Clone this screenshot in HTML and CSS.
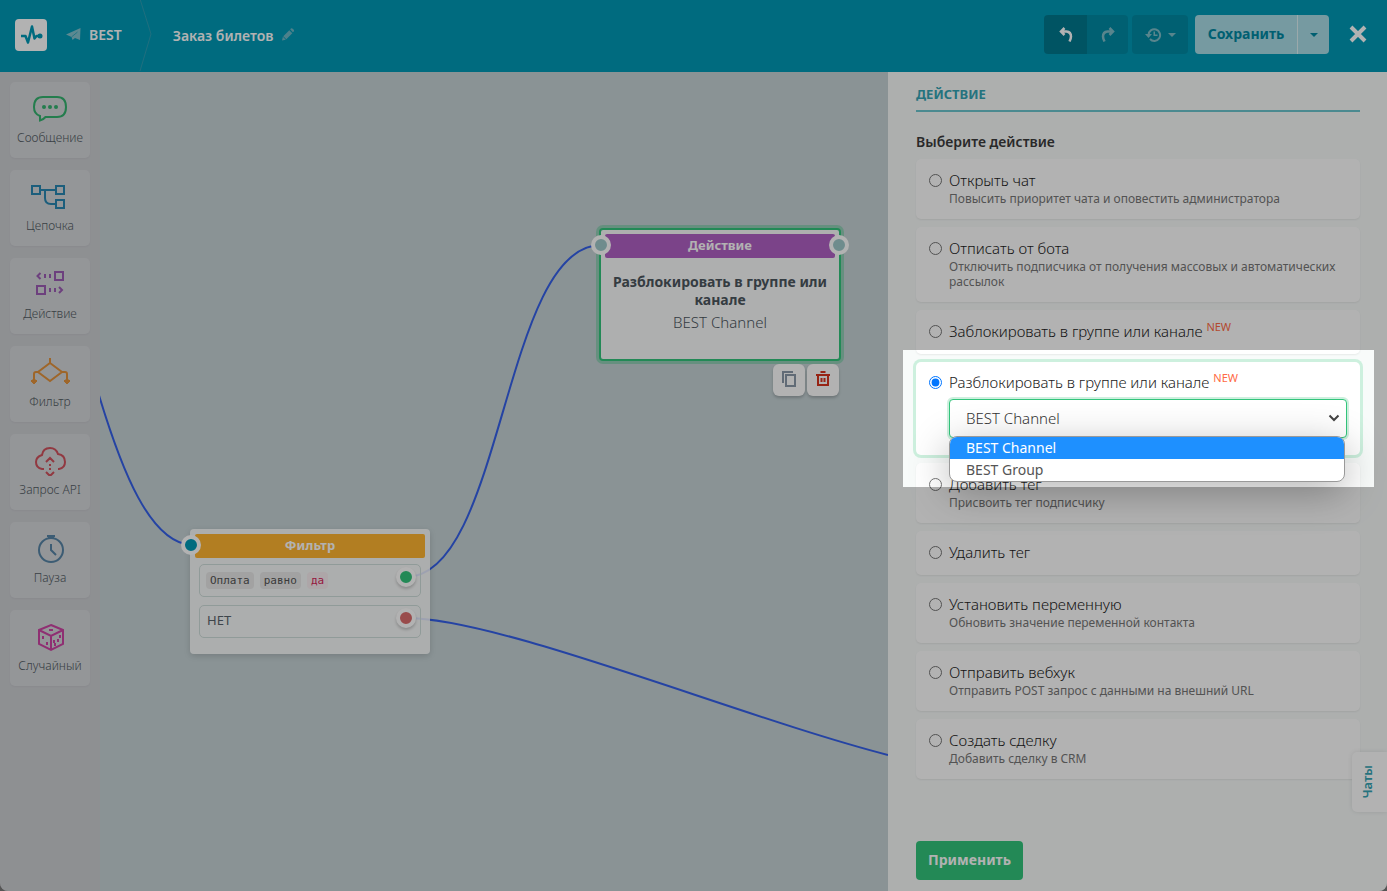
FILE: index.html
```html
<!DOCTYPE html>
<html lang="ru">
<head>
    <meta charset="UTF-8">
    <title>Заказ билетов</title>
    <meta name="viewport" content="width=device-width, initial-scale=1.0">
    <link rel="stylesheet" href="styles.css">
</head>
<body>
<div class="app">
    <header class="header">
        <a class="logo" href="#" aria-label="BEST">
            <svg width="32" height="32" viewBox="0 0 32 32"><path d="M6 17h4.500l2.500 6.500 4-16 2.500 12 2-2.500h4" fill="none" stroke="#009ab7" stroke-width="2.500" stroke-linejoin="round"/><circle cx="25" cy="17" r="2.500" fill="#009ab7"/></svg>
        </a>
        <a class="bot" href="#">
            <svg width="15" height="14" viewBox="0 0 15 14"><path d="M0 7.500 14.500 1 14 13 9 11 6.500 13 5.500 10z" fill="#85c4d0"/><path d="M5.500 10 11.500 5" stroke="#009ab7" stroke-width=".6"/></svg>
            BEST
        </a>
        <svg class="chevron" width="14" height="72" viewBox="0 0 14 72"><path d="M1 0 12 35 1 72" fill="none" stroke="#2e9fb5"/></svg>
        <h1 class="flow-name">Заказ билетов</h1>
        <button class="edit" aria-label="Изменить">
            <svg width="12" height="13" viewBox="0 0 14 14"><path d="M0 14 1 9.500 4.500 13zM1.500 9 8.500 2l3.500 3.500-7 7zM9.500 1l1-1q1-.6 2 .3l1.200 1.200q.7 1 0 2l-1 1z" fill="#6fb9c7"/></svg>
        </button>
        <div class="tools">
            <div class="group">
                <button class="tool undo" aria-label="Отменить">
                    <svg width="14" height="16" viewBox="0 0 14 16"><path d="M5.500 1 2 4.500 5.500 8M2 4.500h5.500q4.500.5 4.500 5 0 2-1.500 5" fill="none" stroke="#fff" stroke-width="2.500"/></svg>
                </button>
                <button class="tool redo" aria-label="Повторить">
                    <svg width="14" height="16" viewBox="0 0 14 16"><path d="M8.500 1 12 4.500 8.500 8M12 4.500H6.500q-4.500.5-4.500 5 0 2 1.500 5" fill="none" stroke="#7fbfca" stroke-width="2.500"/></svg>
                </button>
            </div>
            <button class="tool history" aria-label="История">
                <svg width="17" height="14" viewBox="0 0 17 14"><path d="M3.500 7a5.800 5.800 0 1 1 1.500 4" fill="none" stroke="#7fbfca" stroke-width="2"/><path d="M0 6h7L3.500 10zM8.500 3.500h1.500v3h2.500V8h-4z" fill="#7fbfca"/></svg>
                <svg width="8" height="4" viewBox="0 0 8 4"><path d="M0 0h8L4 4z" fill="#7fbfca"/></svg>
            </button>
            <div class="group save-group">
                <button class="save">Сохранить</button>
                <button class="save-more" aria-label="Ещё">
                    <svg width="8" height="4" viewBox="0 0 8 4"><path d="M0 0h8L4 4z" fill="#0088a3"/></svg>
                </button>
            </div>
            <button class="close" aria-label="Закрыть">
                <svg width="18" height="18" viewBox="0 0 18 18"><path d="M2 2l14 14M16 2 2 16" stroke="#fff" stroke-width="4"/></svg>
            </button>
        </div>
    </header>

    <div class="main">
        <nav class="sidebar">
            <button class="block">
                <svg width="40" height="32" viewBox="0 0 40 32" fill="none" stroke="#34b36f" stroke-width="2"><path d="M13 5h14q9 0 9 10t-9 10H15.500q-2.500 3-5.500 3.500V24Q4 22 4 15 4 5 13 5z"/><g fill="#34b36f" stroke="none"><circle cx="14" cy="15" r="2"/><circle cx="20" cy="15" r="2"/><circle cx="26" cy="15" r="2"/></g></svg>
                Сообщение
            </button>
            <button class="block">
                <svg width="40" height="32" viewBox="0 0 40 32" fill="none" stroke="#2987b2" stroke-width="2"><rect x="2" y="6" width="8" height="8"/><rect x="26" y="6" width="8" height="8"/><rect x="26" y="20" width="8" height="8"/><path d="M10 10h16M15 10v8q0 6 6 6h5"/></svg>
                Цепочка
            </button>
            <button class="block">
                <svg width="40" height="32" viewBox="0 0 40 32" fill="none" stroke="#9c5cb5" stroke-width="2"><rect x="25" y="4" width="8" height="8"/><rect x="7" y="18" width="8" height="8"/><path d="M10.500 5 7.500 8l3 3M29 19l3 3-3 3M15 6v4M20 6v4M20 20v4M25 20v4"/></svg>
                Действие
            </button>
            <button class="block">
                <svg width="40" height="32" viewBox="0 0 40 32" fill="none" stroke="#e3933d" stroke-width="2"><path d="M20 2v5M20 7 32 16 20 25 8 16zM8 16H6q-2 0-2 2v8M32 16h3q2 0 2 2v8"/><path d="M2 24h4l1 1-3 3-3-3zM35 24h4l1 1-3 3-3-3z" fill="#e3933d" stroke-width="1"/></svg>
                Фильтр
            </button>
            <button class="block">
                <svg width="40" height="32" viewBox="0 0 40 32" fill="none" stroke="#d0525e" stroke-width="2"><path d="M14 25h-2q-6-1-6-7 0-5 6-7 1-7 8-7 6 0 8 6 7 1 7 8 0 6-6 7h-1M16 18l4-4 4 4M16 28l4 4 4-4M20 20v2M20 24v2"/></svg>
                Запрос API
            </button>
            <button class="block">
                <svg width="40" height="32" viewBox="0 0 40 32" fill="none" stroke="#5785a6" stroke-width="2"><circle cx="21" cy="18" r="12"/><path d="M17 4h8M18 5.500h6M21 12v6l5 5"/></svg>
                Пауза
            </button>
            <button class="block">
                <svg width="40" height="32" viewBox="0 0 40 32" fill="none" stroke="#cd44a4" stroke-width="2"><path d="M21 5 33 10v14L21 30 9 24V10zM9 10l12 6 12-6M21 16v14"/><path d="M19 10h4M13 16v3M17 22v3M30 15v3M28 19v3M25 23v3M24 20v3"/></svg>
                Случайный
            </button>
        </nav>

        <div class="canvas">
            <svg class="lines" width="788" height="819" viewBox="0 0 788 819" fill="none" stroke="#3561ea" stroke-width="2">
                <path d="M-2 320C22 400 50 470 91 473"/>
                <path d="M306 505C403 505 403 173 501 173"/>
                <path d="M306 546C400 546 640 645 788 683"/>
            </svg>

            <div class="node node-action">
                <span class="port port-in"></span>
                <span class="port port-out"></span>
                <p class="node-title purple">Действие</p>
                <p class="node-name">Разблокировать в группе или канале</p>
                <p class="node-text">BEST Channel</p>
                <div class="node-tools">
                    <button class="node-tool" aria-label="Копировать">
                        <svg width="14" height="16" viewBox="0 0 14 16" fill="none" stroke="#8b9aa9" stroke-width="2"><path d="M1 12V1h10"/><rect x="4" y="4" width="9" height="11"/></svg>
                    </button>
                    <button class="node-tool" aria-label="Удалить">
                        <svg width="14" height="16" viewBox="0 0 14 16" fill="none" stroke="#d9341f" stroke-width="2"><path d="M0 4h14M4.500 1h5M2 4v10h10V4M5.500 7v4M8.500 7v4"/></svg>
                    </button>
                </div>
            </div>

            <div class="node node-filter">
                <span class="port port-in"></span>
                <p class="node-title orange">Фильтр</p>
                <div class="row">
                    <code>Оплата</code><code>равно</code><code class="red">да</code>
                    <span class="port port-row green"></span>
                </div>
                <div class="row">
                    <span class="no">НЕТ</span>
                    <span class="port port-row coral"></span>
                </div>
            </div>
        </div>

        <form class="panel">
            <h2 class="panel-title">ДЕЙСТВИЕ</h2>
            <h3 class="panel-sub">Выберите действие</h3>
            <div class="options">
                <div class="option">
                    <input type="radio" name="action" id="a1">
                    <label for="a1">Открыть чат<small>Повысить приоритет чата и оповестить администратора</small></label>
                </div>
                <div class="option">
                    <input type="radio" name="action" id="a2">
                    <label for="a2">Отписать от бота<small>Отключить подписчика от получения массовых и автоматических рассылок</small></label>
                </div>
                <div class="option">
                    <input type="radio" name="action" id="a3">
                    <label for="a3">Заблокировать в группе или канале <sup>NEW</sup></label>
                </div>
                <div class="option selected">
                    <input type="radio" name="action" id="a4" checked>
                    <div class="option-body">
                        <label for="a4">Разблокировать в группе или канале <sup>NEW</sup></label>
                        <div class="select-wrap">
                            <select class="select" aria-label="Канал">
                                <option>BEST Channel</option>
                                <option>BEST Group</option>
                            </select>
                            <svg class="arrow" width="12" height="8" viewBox="0 0 12 8"><path d="M1.500 1.500 6 6l4.500-4.500" fill="none" stroke="#444" stroke-width="2"/></svg>
                            <ul class="dropdown">
                                <li class="active">BEST Channel</li>
                                <li>BEST Group</li>
                            </ul>
                        </div>
                    </div>
                    <div class="spotlight"></div>
                </div>
                <div class="option">
                    <input type="radio" name="action" id="a5">
                    <label for="a5">Добавить тег<small>Присвоить тег подписчику</small></label>
                </div>
                <div class="option">
                    <input type="radio" name="action" id="a6">
                    <label for="a6">Удалить тег</label>
                </div>
                <div class="option">
                    <input type="radio" name="action" id="a7">
                    <label for="a7">Установить переменную<small>Обновить значение переменной контакта</small></label>
                </div>
                <div class="option">
                    <input type="radio" name="action" id="a8">
                    <label for="a8">Отправить вебхук<small>Отправить POST запрос с данными на внешний URL</small></label>
                </div>
                <div class="option">
                    <input type="radio" name="action" id="a9">
                    <label for="a9">Создать сделку<small>Добавить сделку в CRM</small></label>
                </div>
            </div>
            <button type="button" class="apply">Применить</button>
        </form>
    </div>
    <button class="chats"><span>Чаты</span></button>
</div>
</body>
</html>
```

FILE: styles.css
```css
*{margin: 0;padding: 0;box-sizing: border-box;}
body{
    overflow: hidden;
    background-color: #555;
    font-family: "Noto Sans", "Open Sans", sans-serif;
    font-size: 14px;
    color: #3c3c3c;
}
button{
    border: none;
    background: none;
    font-family: inherit;
    cursor: pointer;
}
a{text-decoration: none;}
svg{display: block;flex-shrink: 0;}

.app{
    position: relative;
    display: flex;
    flex-direction: column;
    height: 100vh;
    overflow: hidden;
    border-radius: 0 0 8px 8px;
}

/* header */
.header{
    display: flex;
    align-items: center;
    flex-shrink: 0;
    height: 72px;
    padding: 0 20px 2px 15px;
    background-color: #009ab7;
}
.logo{
    border-radius: 4px;
    background-color: #fff;
}
.bot{
    display: flex;
    align-items: center;
    gap: 8px;
    margin-left: 19px;
    padding-bottom: 2px;
    font-size: 14px;
    font-weight: 600;
    color: #fff;
}
.chevron{margin-left: 17px;}
.flow-name{
    margin-left: 20px;
    font-size: 14px;
    font-weight: 600;
    color: #fff;
}
.edit{margin-left: 9px;padding-bottom: 2px;}
.tools{
    display: flex;
    align-items: center;
    margin-left: auto;
    padding-bottom: 1px;
}
.group{
    display: flex;
    overflow: hidden;
    border-radius: 4px;
}
.tool{
    display: flex;
    align-items: center;
    justify-content: center;
    gap: 6px;
    height: 39px;
    background-color: #008aa4;
}
.undo{width: 43px;background-color: #00798f;}
.redo{width: 41px;}
.history{width: 56px;margin: 0 7px 0 4px;border-radius: 4px;}
.save,.save-more{
    height: 39px;
    background-color: #a9dde7;
}
.save{
    width: 102px;
    padding-bottom: 2px;
    font-size: 14px;
    font-weight: bold;
    color: #0088a3;
}
.save-more{
    display: flex;
    align-items: center;
    justify-content: center;
    width: 32px;
    border-left: 1px solid #dff2f5;
}
.close{margin-left: 20px;padding-bottom: 2px;}

.main{
    display: flex;
    flex: 1;
    min-height: 0;
}

/* blocks on the left */
.sidebar{
    display: flex;
    flex-direction: column;
    gap: 12px;
    width: 100px;
    padding: 10px;
    background-color: #ccced2;
}
.block{
    display: flex;
    flex-direction: column;
    align-items: center;
    gap: 6px;
    height: 76px;
    padding-top: 10px;
    border-radius: 5px;
    background-color: #d5d7da;
    font-size: 12px;
    font-weight: 300;
    line-height: 16px;
    color: #525b63;
    box-shadow: 0 1px 2px rgba(0,0,0,.04);
}

/* canvas */
.canvas{
    position: relative;
    flex: 1;
    background-color: #c6d3d6;
}
.lines{
    position: absolute;
    left: 0;
    top: 0;
}
.node{
    position: absolute;
    border-radius: 4px;
    background-color: rgba(255,255,255,.85);
    box-shadow: 0 2px 6px rgba(0,0,0,.15);
}
.node-action{
    left: 499px;
    top: 156px;
    width: 242px;
    height: 133px;
    padding: 4px;
    border: 2px solid #33c57c;
    background-color: #fafbfb;
    box-shadow: 0 0 0 3px rgba(51,197,124,.35);
}
.node-filter{
    left: 90px;
    top: 457px;
    width: 240px;
    height: 125px;
    padding: 5px;
}
.node-title{
    height: 24px;
    border-radius: 2px;
    font-size: 13px;
    font-weight: bold;
    line-height: 23px;
    text-align: center;
    color: #fff;
}
.purple{margin-bottom: 15px;background-color: #b161c4;}
.orange{background-color: #ffb531;}
.node-name,.node-text{
    line-height: 18px;
    text-align: center;
    color: #4c565e;
}
.node-name{
    margin-bottom: 4px;
    font-size: 14px;
    font-weight: bold;
}
.node-text{
    font-size: 15px;
    font-weight: 300;
}
.node-tools{
    position: absolute;
    right: 0;
    top: 134px;
    display: flex;
    gap: 2px;
}
.node-tool{
    display: flex;
    align-items: center;
    justify-content: center;
    width: 32px;
    height: 32px;
    padding-bottom: 2px;
    border-radius: 6px;
    background-color: #fff;
    box-shadow: 0 2px 3px rgba(0,0,0,.2);
}
.port{
    position: absolute;
    width: 20px;
    height: 20px;
    border: 4px solid #fff;
    border-radius: 50%;
    background-color: #009ab7;
}
.port-in{left: -9px;top: 6px;}
.node-action .port{
    top: 5px;
    background-color: #9fc9cb;
}
.node-action .port-in{left: -10px;}
.node-action .port-out{right: -10px;}
.row{
    position: relative;
    display: flex;
    align-items: center;
    gap: 6px;
    height: 33px;
    margin: 6px 4px 8px;
    padding: 0 6px;
    border: 1px solid #cfdedb;
    border-radius: 5px;
    font-size: 13px;
    color: #5a646c;
}
.row code{
    padding: 0 4px;
    border-radius: 4px;
    background-color: #e8e8e8;
    font-family: "DejaVu Sans Mono", monospace;
    font-size: 11px;
    line-height: 17px;
    color: #555;
}
.row code.red{background-color: #f8eef1;color: #d6265b;}
.no{padding: 0 1px 4px;}
.port-row{
    right: 4px;
    top: 2px;
    box-shadow: 0 2px 3px rgba(0,0,0,.2);
}
.green{background-color: #33c57c;}
.coral{background-color: #dc6c6c;}

/* right panel */
.panel{
    display: flex;
    flex-direction: column;
    align-items: stretch;
    width: 499px;
    padding: 12px 27px 11px 28px;
    background-color: #f8fbfa;
}
.panel-title{
    padding-bottom: 6px;
    border-bottom: 2px solid #6cc6cf;
    font-size: 13px;
    font-weight: bold;
    line-height: 20px;
    color: #35a5b5;
}
.panel-sub{
    margin: 20px 0 7px;
    font-size: 14px;
    font-weight: 600;
    line-height: 20px;
}
.options{
    display: flex;
    flex-direction: column;
    gap: 8px;
}
.option{
    display: flex;
    align-items: flex-start;
    padding: 10px 13px 12px;
    border-radius: 5px;
    background-color: #fff;
    font-size: 15px;
    font-weight: 300;
    line-height: 22px;
    color: #222;
    box-shadow: 0 1px 2px rgba(0,0,0,.07);
}
.option input{
    flex-shrink: 0;
    width: 13px;
    height: 13px;
    margin: 5px 7px 0 0;
}
.option label{display: block;}
.option small{
    display: block;
    margin-bottom: 1px;
    font-size: 12px;
    font-weight: 400;
    line-height: 15px;
    color: #777;
}
.option sup{
    font-size: 11px;
    font-weight: 400;
    line-height: 0;
    color: #ff6b45;
}
.selected{
    position: relative;
    padding-top: 9px;
    box-shadow: 0 0 0 3px #cdf0de;
}
.option-body{flex: 1;}
.select-wrap{
    position: relative;
    margin: 6px 0 5px;
}
.select{
    display: block;
    width: 100%;
    height: 39px;
    padding: 0 16px 2px;
    border: 1px solid #33c57c;
    border-radius: 4px;
    outline: none;
    appearance: none;
    background-color: #fff;
    box-shadow: 0 0 0 2px #cdf0de;
    font-family: inherit;
    font-size: 15px;
    font-weight: 300;
    color: #333;
}
.arrow{
    position: absolute;
    right: 7px;
    top: 15px;
}
.dropdown{
    position: absolute;
    z-index: 10;
    left: 0;
    right: 2px;
    top: 37px;
    overflow: hidden;
    border: 1px solid #999;
    border-radius: 8px;
    background-color: #fff;
    box-shadow: 0 10px 40px rgba(0,0,0,.3);
    list-style: none;
    font-size: 14px;
    font-weight: 400;
    color: #555;
}
.dropdown li{
    height: 22px;
    padding-left: 16px;
}
.dropdown .active{background-color: #1e90ff;color: #fff;}

/* dims everything round the open list */
.spotlight{
    position: absolute;
    z-index: 100;
    left: -13px;
    right: -14px;
    top: -12px;
    height: 137px;
    box-shadow: 0 0 0 2000px rgba(0,0,0,.3);
    pointer-events: none;
}
.apply{
    align-self: flex-start;
    width: 107px;
    height: 39px;
    margin-top: auto;
    padding-bottom: 2px;
    border-radius: 4px;
    background-color: #33c57c;
    font-size: 14px;
    font-weight: bold;
    color: #fff;
}
.chats{
    position: absolute;
    right: 0;
    bottom: 79px;
    display: flex;
    align-items: center;
    justify-content: center;
    width: 35px;
    height: 60px;
    padding-right: 5px;
    border-radius: 5px 0 0 5px;
    background-color: #fff;
    box-shadow: 0 0 5px rgba(0,0,0,.1);
    font-size: 13px;
    font-weight: 600;
    color: #35a5b5;
}
.chats span{
    writing-mode: vertical-rl;
    transform: rotate(180deg);
}
```
